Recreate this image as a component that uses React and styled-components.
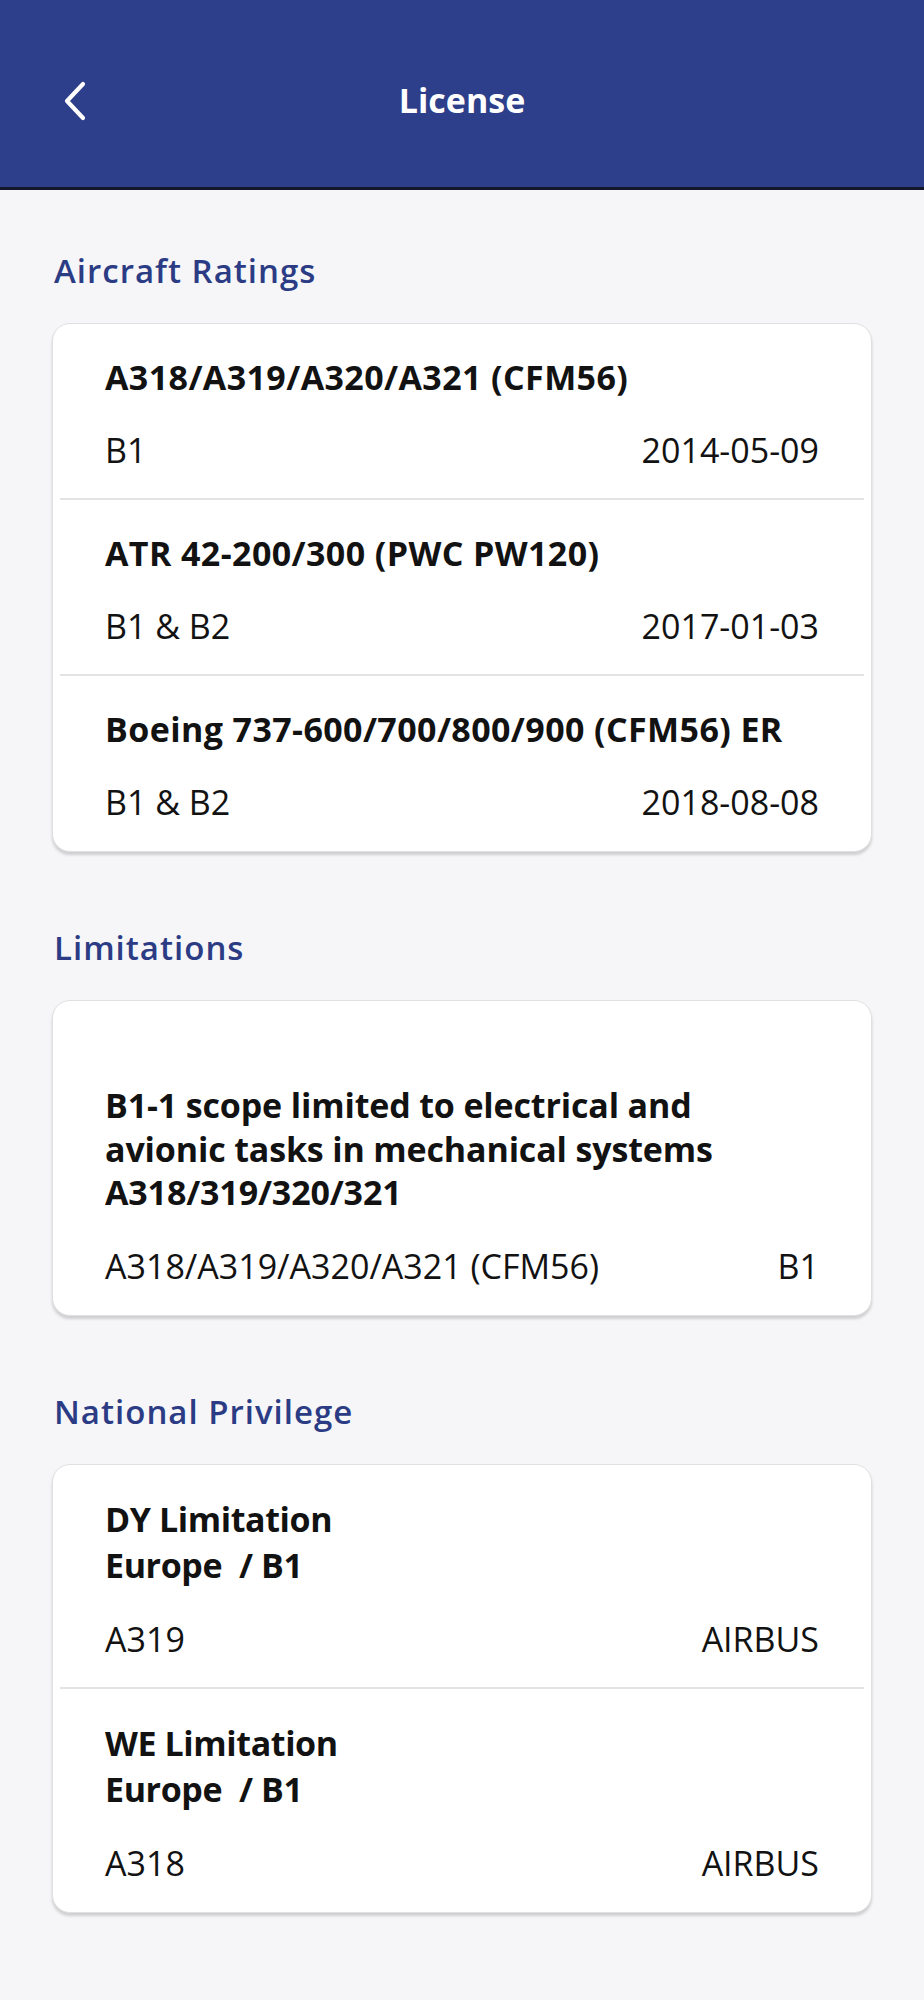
import styled, { createGlobalStyle } from 'styled-components'

const GlobalStyle = createGlobalStyle`
  body {
    margin: 0;
    background: #f6f6f8;
    font-family: "Open Sans", "Noto Sans", sans-serif;
    color: #121212;
  }
`

const ratings = [
  { title: 'A318/A319/A320/A321 (CFM56)', left: 'B1', right: '2014-05-09' },
  { title: 'ATR 42-200/300 (PWC PW120)', left: 'B1 & B2', right: '2017-01-03' },
  { title: 'Boeing 737-600/700/800/900 (CFM56) ER', left: 'B1 & B2', right: '2018-08-08' },
]

const privileges = [
  { title: ['DY Limitation', 'Europe  / B1'], left: 'A319', right: 'AIRBUS' },
  { title: ['WE Limitation', 'Europe  / B1'], left: 'A318', right: 'AIRBUS' },
]

function App() {
  return (
    <Page>
      <GlobalStyle />
      <Header>
        <BackButton aria-label="back">
          <svg width="24" height="40" viewBox="0 0 24 40" fill="none">
            <path d="M20 3 L4 20 L20 37" stroke="#fff" strokeWidth="4.2" strokeLinecap="round" strokeLinejoin="round" />
          </svg>
        </BackButton>
        <HeaderTitle>License</HeaderTitle>
      </Header>

      <Content>
        <SectionTitle $first>Aircraft Ratings</SectionTitle>
        <Card>
          {ratings.map((r, i) => (
            <Row key={i} $last={i === ratings.length - 1}>
              <RowTitle>{r.title}</RowTitle>
              <RowMeta>
                <span>{r.left}</span>
                <span>{r.right}</span>
              </RowMeta>
            </Row>
          ))}
        </Card>

        <SectionTitle>Limitations</SectionTitle>
        <Card>
          <Row $last $top="83px">
            <RowTitle $lh="43.5px" $ls="-0.15px">
              B1-1 scope limited to electrical and<br />
              avionic tasks in mechanical systems<br />
              A318/319/320/321
            </RowTitle>
            <RowMeta>
              <span>A318/A319/A320/A321 (CFM56)</span>
              <span>B1</span>
            </RowMeta>
          </Row>
        </Card>

        <SectionTitle>National Privilege</SectionTitle>
        <Card>
          {privileges.map((p, i) => (
            <Row key={i} $last={i === privileges.length - 1}>
              <RowTitle $lh="46px" $ls="-0.4px">
                {p.title[0]}<br />
                <Pre>{p.title[1]}</Pre>
              </RowTitle>
              <RowMeta>
                <span>{p.left}</span>
                <span>{p.right}</span>
              </RowMeta>
            </Row>
          ))}
        </Card>
      </Content>
    </Page>
  )
}

const Page = styled.div`
  min-height: 100vh;
  background: #f6f6f8;
`

const Header = styled.header`
  height: 187px;
  background: #2d3e8a;
  border-bottom: 3px solid #14162a;
  display: flex;
  align-items: center;
  justify-content: center;
  position: relative;
`

const BackButton = styled.button`
  position: absolute;
  left: 63px;
  top: 81px;
  background: none;
  border: 0;
  padding: 0;
  display: flex;
`

const HeaderTitle = styled.h1`
  margin: 0;
  color: #fff;
  font-size: 34px;
  font-weight: 700;
  line-height: 44px;
  padding-top: 12px;
`

const Content = styled.main`
  padding: 0 52px 60px;
  display: flex;
  flex-direction: column;
`

const SectionTitle = styled.h2`
  margin: ${p => (p.$first ? '59px' : '74px')} 0 30px;
  padding-left: 2px;
  color: #2b3c85;
  font-size: 33px;
  font-weight: 600;
  letter-spacing: 1px;
  line-height: 44px;
`

const Card = styled.section`
  background: #fff;
  border: 1px solid #e0e0e0;
  border-radius: 18px;
  box-shadow: 0 3px 3px rgba(0, 0, 0, 0.16);
  display: flex;
  flex-direction: column;
  overflow: hidden;
`

const Row = styled.div`
  padding: ${p => p.$top || '31px'} 52px ${p => (p.$last ? '27px' : '28px')};
  position: relative;
  display: flex;
  flex-direction: column;
  gap: 29px;

  &::after {
    content: '';
    display: ${p => (p.$last ? 'none' : 'block')};
    position: absolute;
    left: 7px;
    right: 7px;
    bottom: 0;
    height: 2px;
    background: #e3e3e3;
  }
`

const RowTitle = styled.div`
  font-size: 34px;
  font-weight: 700;
  line-height: ${p => p.$lh || '44px'};
  letter-spacing: ${p => p.$ls || '0.4px'};
`

const Pre = styled.span`
  white-space: pre;
`

const RowMeta = styled.div`
  display: flex;
  justify-content: space-between;
  font-size: 34px;
  font-weight: 400;
  line-height: 44px;
`

export default App
